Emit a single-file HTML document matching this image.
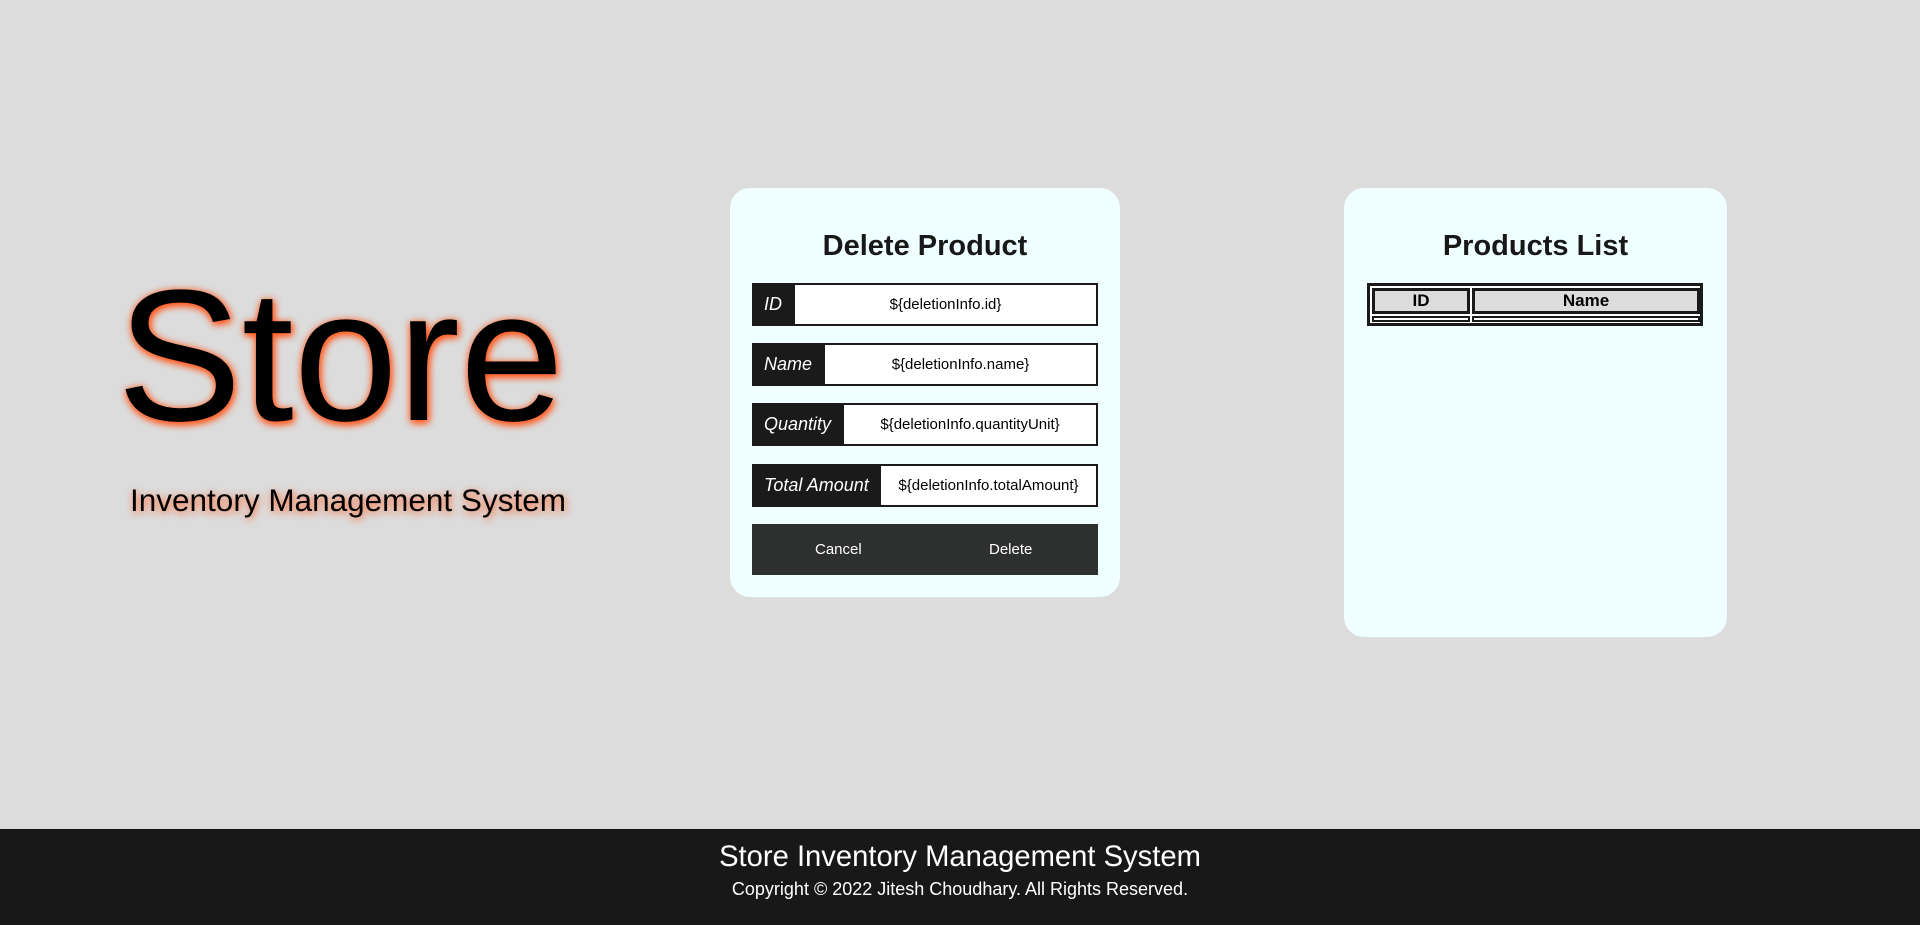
<!DOCTYPE html>
<html><head><meta charset="utf-8"><style>
*{margin:0;padding:0;box-sizing:border-box}
body{width:1920px;height:925px;background:#dcdcdc;font-family:"Liberation Sans",Arial,sans-serif;position:relative;overflow:hidden}
.store{position:absolute;left:117px;top:246px;font-size:187px;line-height:220px;color:#000;text-shadow:1px 2px 8px #ff5a1f,1px 2px 8px #ff5a1f}
.sub{position:absolute;left:130px;top:480px;font-size:31.5px;line-height:40px;color:#000;text-shadow:1px 2px 8px #ff5a1f}
.card{position:absolute;background:#f0ffff;border-radius:20px}
h2{position:absolute;text-align:center;font-size:29px;font-weight:bold;color:#181818;top:230px}
.row{position:absolute;left:752px;width:346px;height:43px;background:#1a1a1a;display:flex}
.row .l{color:#fff;font-style:italic;font-size:18px;line-height:43px;padding-left:12px}
.row .v{position:absolute;top:2px;bottom:2px;right:2px;background:#fff;font-size:15px;display:flex;align-items:center;justify-content:center;color:#000}
.btns{position:absolute;left:752px;top:524px;width:346px;height:51px;background:#2e2f2f;color:#fff;font-size:15px}
.btns span{position:absolute;top:17px}
.foot{position:absolute;left:0;top:829px;width:1920px;height:96px;background:#181818;color:#fff;text-align:center}
</style></head><body>
<div class="store">Store</div>
<div class="sub">Inventory Management System</div>

<div class="card" style="left:730px;top:188px;width:390px;height:409px"></div>
<h2 style="left:730px;width:390px">Delete Product</h2>
<div class="row" style="top:283px"><div class="l">ID</div><div class="v" style="left:43px">${deletionInfo.id}</div></div>
<div class="row" style="top:343px"><div class="l">Name</div><div class="v" style="left:73px">${deletionInfo.name}</div></div>
<div class="row" style="top:403px"><div class="l">Quantity</div><div class="v" style="left:92px">${deletionInfo.quantityUnit}</div></div>
<div class="row" style="top:464px"><div class="l">Total Amount</div><div class="v" style="left:129px">${deletionInfo.totalAmount}</div></div>
<div class="btns"><span style="left:63px">Cancel</span><span style="left:237px">Delete</span></div>

<div class="card" style="left:1344px;top:188px;width:383px;height:449px"></div>
<h2 style="left:1344px;width:383px">Products List</h2>
<div style="position:absolute;left:1367px;top:283px;width:336px;height:43px;border:3px solid #1a1a1a;background:#fff">
 <div style="position:absolute;left:2px;top:2px;width:98px;height:26px;border:3px solid #1a1a1a;background:#dcdcdc;text-align:center;font-weight:bold;font-size:17px;line-height:20px">ID</div>
 <div style="position:absolute;left:102px;top:2px;width:228px;height:26px;border:3px solid #1a1a1a;background:#dcdcdc;text-align:center;font-weight:bold;font-size:17px;line-height:20px">Name</div>
 <div style="position:absolute;left:2px;top:30px;width:98px;height:6px;border:2px solid #1a1a1a"></div>
 <div style="position:absolute;left:102px;top:30px;width:228px;height:6px;border:2px solid #1a1a1a"></div>
</div>

<div class="foot">
 <div style="font-size:29.2px;position:absolute;left:0;right:0;top:12px">Store Inventory Management System</div>
 <div style="font-size:18px;position:absolute;left:0;right:0;top:50px">Copyright © 2022 Jitesh Choudhary. All Rights Reserved.</div>
</div>
</body></html>
